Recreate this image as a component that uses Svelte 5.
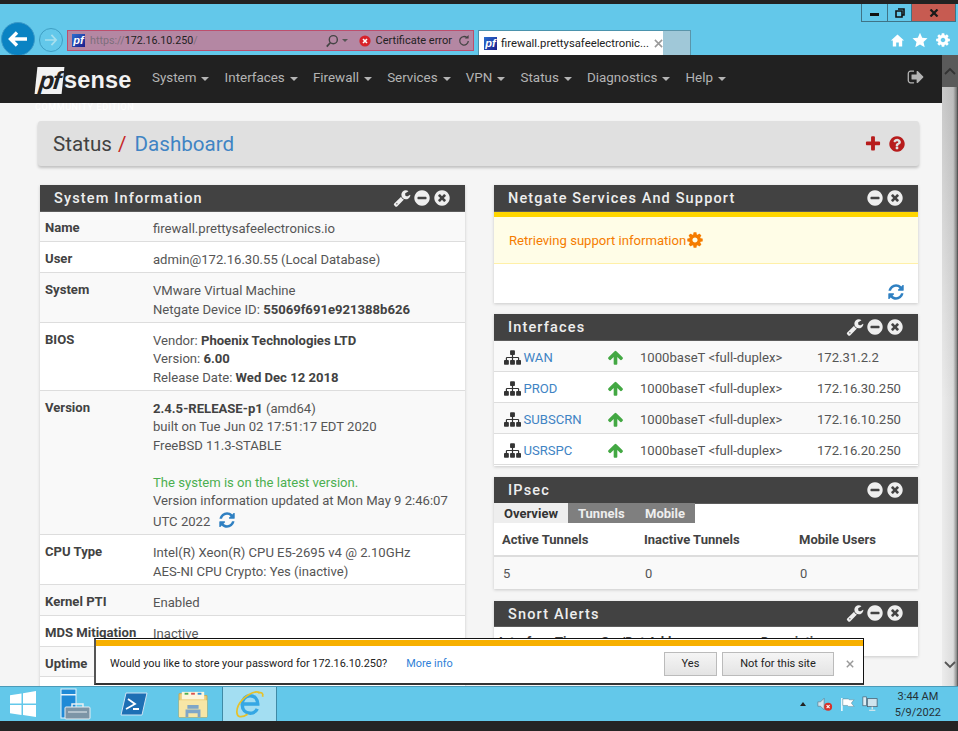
<script lang="ts">
  const icons: Record<string, string> = {
    wrench: "M448 1472q0-26-19-45t-45-19-45 19-19 45 19 45 45 19 45-19 19-45zm644-420l-682 682q-37 37-90 37-52 0-91-37l-106-108q-38-36-38-90 0-53 38-91l681-681q39 98 114.5 173.5t173.5 114.5zm634-435q0 39-23 106-47 134-164.5 217.5t-258.5 83.5q-185 0-316.5-131.5t-131.5-316.5 131.5-316.5 316.5-131.5q58 0 121.5 16.5t107.5 46.5q16 11 16 28t-16 28l-293 169v224l193 107q5-3 79-48.5t135.5-81 70.5-35.5q15 0 23.5 10t8.5 25z",
    refresh: "M1639 1056q0 5-1 7-64 268-268 434.5t-478 166.5q-146 0-282.5-55t-243.5-157l-129 129q-19 19-45 19t-45-19-19-45v-448q0-26 19-45t45-19h448q26 0 45 19t19 45-19 45l-137 137q71 66 161 102t187 36q134 0 250-65t186-179q11-17 53-117 8-23 30-23h192q13 0 22.5 9.5t9.5 22.5zm25-800v448q0 26-19 45t-45 19h-448q-26 0-45-19t-19-45 19-45l138-138q-148-137-349-137-134 0-250 65t-186 179q-11 17-53 117-8 23-30 23h-199q-13 0-22.5-9.5t-9.5-22.5v-7q65-268 270-434.5t480-166.5q146 0 284 55.5t245 156.5l130-129q19-19 45-19t45 19 19 45z",
    sitemap: "M1792 1248v320q0 40-28 68t-68 28h-320q-40 0-68-28t-28-68v-320q0-40 28-68t68-28h96v-192h-512v192h96q40 0 68 28t28 68v320q0 40-28 68t-68 28h-320q-40 0-68-28t-28-68v-320q0-40 28-68t68-28h96v-192h-512v192h96q40 0 68 28t28 68v320q0 40-28 68t-68 28h-320q-40 0-68-28t-28-68v-320q0-40 28-68t68-28h96v-192q0-52 38-90t90-38h512v-192h-96q-40 0-68-28t-28-68v-320q0-40 28-68t68-28h320q40 0 68 28t28 68v320q0 40-28 68t-68 28h-96v192h512q52 0 90 38t38 90v192h96q40 0 68 28t28 68z",
    up: "M1675 971q0 51-37 90l-75 75q-38 38-91 38-54 0-90-38l-294-293v704q0 52-37.5 84.5t-90.5 32.5h-128q-53 0-90.5-32.5t-37.5-84.5v-704l-294 293q-36 38-90 38t-90-38l-75-75q-38-38-38-90 0-53 38-91l651-651q35-37 90-37 54 0 91 37l651 651q37 39 37 91z",
    minus: "M1344 960v-128q0-26-19-45t-45-19h-768q-26 0-45 19t-19 45v128q0 26 19 45t45 19h768q26 0 45-19t19-45zm320-64q0 209-103 385.5t-279.5 279.5-385.5 103-385.5-103-279.5-279.5-103-385.5 103-385.5 279.5-279.5 385.5-103 385.5 103 279.5 279.5 103 385.5z",
    times: "M1277 1122q0-26-19-45l-181-181 181-181q19-19 19-45 0-27-19-46l-90-90q-19-19-46-19-26 0-45 19l-181 181-181-181q-19-19-45-19-27 0-46 19l-90 90q-19 19-19 46 0 26 19 45l181 181-181 181q-19 19-19 45 0 27 19 46l90 90q19 19 46 19 26 0 45-19l181-181 181 181q19 19 45 19 27 0 46-19l90-90q19-19 19-46zm387-226q0 209-103 385.5t-279.5 279.5-385.5 103-385.5-103-279.5-279.5-103-385.5 103-385.5 279.5-279.5 385.5-103 385.5 103 279.5 279.5 103 385.5z",
    plus: "M1600 736v192q0 40-28 68t-68 28h-416v416q0 40-28 68t-68 28h-192q-40 0-68-28t-28-68v-416h-416q-40 0-68-28t-28-68v-192q0-40 28-68t68-28h416v-416q0-40 28-68t68-28h192q40 0 68 28t28 68v416h416q40 0 68 28t28 68z",
    help: "M1024 1376v-192q0-14-9-23t-23-9h-192q-14 0-23 9t-9 23v192q0 14 9 23t23 9h192q14 0 23-9t9-23zm256-672q0-88-55.5-163t-138.5-116-170-41q-243 0-371 213-15 24 8 42l132 100q7 6 19 6 16 0 25-12 53-68 86-92 34-24 86-24 48 0 85.5 26t37.5 59q0 38-20 61t-68 45q-63 28-115.5 86.5t-52.5 125.5v36q0 14 9 23t23 9h192q14 0 23-9t9-23q0-19 21.5-49.5t54.5-49.5q32-18 49-28.5t46-35 44.5-48 28-60.5 12.5-81zm384 192q0 209-103 385.5t-279.5 279.5-385.5 103-385.5-103-279.5-279.5-103-385.5 103-385.5 279.5-279.5 385.5-103 385.5 103 279.5 279.5 103 385.5z",
    cog: "M1152 896q0-106-75-181t-181-75-181 75-75 181 75 181 181 75 181-75 75-181zm512-109v222q0 12-8 23t-20 13l-185 28q-19 54-39 91 35 50 107 138 10 12 10 25t-9 23q-27 37-99 108t-94 71q-12 0-26-9l-138-108q-44 23-91 38-16 136-29 186-7 28-36 28h-222q-14 0-24.5-8.5t-11.5-21.5l-28-184q-49-16-90-37l-141 107q-10 9-25 9-14 0-25-11-126-114-165-168-7-10-7-23 0-12 8-23 15-21 51-66.5t54-70.5q-27-50-41-99l-183-27q-13-2-21-12.5t-8-23.5v-222q0-12 8-23t19-13l186-28q14-46 39-92-40-57-107-138-10-12-10-24 0-10 9-23 26-36 98.5-107.5t94.5-71.5q13 0 26 10l138 107q44-23 91-38 16-136 29-186 7-28 36-28h222q14 0 24.5 8.5t11.5 21.5l28 184q49 16 90 37l142-107q9-9 24-9 13 0 25 10 129 119 165 170 7 8 7 22 0 12-8 23-15 21-51 66.5t-54 70.5q26 50 41 98l183 28q13 2 21 12.5t8 23.5z",
    signout: "M704 1440q0 4 1 20t.5 26.5-3 23.5-10 19.5-20.5 6.5h-320q-119 0-203.5-84.5t-84.5-203.5v-704q0-119 84.5-203.5t203.5-84.5h320q13 0 22.5 9.5t9.5 22.5q0 4 1 20t.5 26.5-3 23.5-10 19.5-20.5 6.5h-320q-66 0-113 47t-47 113v704q0 66 47 113t113 47h312l11.5 1 11.5 3 8 5.5 7 9 2 13.5zm928-544q0 26-19 45l-544 544q-19 19-45 19t-45-19-19-45v-288h-448q-26 0-45-19t-19-45v-384q0-26 19-45t45-19h448v-288q0-26 19-45t45-19 45 19l544 544q19 19 19 45z",
  };

  const navItems = ["System", "Interfaces", "Firewall", "Services", "VPN", "Status", "Diagnostics", "Help"];

  const interfaces = [
    { name: "WAN", media: "1000baseT <full-duplex>", ip: "172.31.2.2" },
    { name: "PROD", media: "1000baseT <full-duplex>", ip: "172.16.30.250" },
    { name: "SUBSCRN", media: "1000baseT <full-duplex>", ip: "172.16.10.250" },
    { name: "USRSPC", media: "1000baseT <full-duplex>", ip: "172.16.20.250" },
  ];
</script>

{#snippet fa(name: string, cls: string)}
  <svg class={cls} viewBox="0 0 1792 1792" aria-hidden="true"><path d={icons[name]} fill="currentColor" /></svg>
{/snippet}

{#snippet panelHead(title: string, wrench: boolean)}
  <div class="panel-head">
    <h2>{title}</h2>
    <div class="panel-tools">
      {#if wrench}{@render fa("wrench", "tool")}{/if}
      {@render fa("minus", "tool")}
      {@render fa("times", "tool")}
    </div>
  </div>
{/snippet}

<div class="screen">
  <div class="titlebar">
    <div class="win-buttons">
      <div class="wb wb-min"><span></span></div>
      <div class="wb wb-max">
        <svg viewBox="0 0 10 10" width="10" height="10"><path d="M3 1h6v6H7M1 3h6v6H1z" fill="none" stroke="#111" stroke-width="1.6" /></svg>
      </div>
      <div class="wb wb-close">
        <svg viewBox="0 0 10 8" width="10" height="8"><path d="M1.5 .5l7 7M8.5 .5l-7 7" stroke="#1a1a1a" stroke-width="2.2" /></svg>
      </div>
    </div>
  </div>

  <div class="toolbar">
    <div class="back">
      <svg viewBox="0 0 20 16" width="20" height="16"><path d="M9 1.5L2.5 8 9 14.5M3 8h16" fill="none" stroke="#fff" stroke-width="3.4" /></svg>
    </div>
    <div class="forward">
      <svg viewBox="0 0 16 14" width="14" height="12"><path d="M8.5 1L14 7l-5.5 6M14 7H1" fill="none" stroke="#a6dfee" stroke-width="2" /></svg>
    </div>
    <div class="address">
      <span class="favicon">pf</span>
      <span class="url"><span class="url-dim">https://</span>172.16.10.250<span class="url-dim">/</span></span>
      <svg class="addr-search" viewBox="0 0 16 16" width="14" height="14"><circle cx="9.5" cy="6.5" r="4.6" fill="none" stroke="#444" stroke-width="1.6" /><path d="M6 10l-4 4.5" stroke="#444" stroke-width="2" /></svg>
      <span class="addr-caret"></span>
      <span class="cert-x">
        <svg viewBox="0 0 12 12" width="12" height="12"><circle cx="6" cy="6" r="5.6" fill="#d8222a" /><path d="M4 4l4 4M8 4l-4 4" stroke="#fff" stroke-width="1.6" /></svg>
      </span>
      <span class="cert">Certificate error</span>
      <svg class="addr-reload" viewBox="0 0 14 14" width="12" height="12"><path d="M10.5 3.2A5 5 0 1 0 12 7" fill="none" stroke="#444" stroke-width="1.5" /><path d="M8 4h4.4V0z" fill="#444" /></svg>
    </div>
    <div class="tab">
      <span class="favicon">pf</span>
      <span class="tab-title">firewall.prettysafeelectronic...</span>
      <svg viewBox="0 0 10 10" width="9" height="9"><path d="M1 1l8 8M9 1l-8 8" stroke="#999" stroke-width="1.7" /></svg>
    </div>
    <div class="new-tab"></div>
    <div class="browser-tools">
      <svg viewBox="0 0 16 16" width="15" height="15"><path d="M8 1.5L1 8h2v6.5h3.6V10h2.8v4.5H13V8h2z" fill="#fff" /></svg>
      <svg viewBox="0 0 16 16" width="16" height="16"><path d="M8 .8l2.2 4.9 5.3.6-4 3.6 1.2 5.3L8 12.5l-4.7 2.7 1.2-5.3-4-3.6 5.3-.6z" fill="#fff" /></svg>
      <svg class="gear" viewBox="0 0 1792 1792" width="16" height="16"><path d={icons.cog} fill="#fff" /></svg>
    </div>
  </div>

  <div class="viewport">
    <div class="page">
      <nav class="navbar">
        <div class="logo">
          <span class="logo-pf">pf</span><span class="logo-sense">sense</span>
          <span class="edition">COMMUNITY EDITION</span>
        </div>
        <ul class="menu">
          {#each navItems as item}
            <li>{item}<span class="caret"></span></li>
          {/each}
        </ul>
        {@render fa("signout", "signout")}
      </nav>

      <div class="content">
        <header class="crumbs">
          <h1>Status <span class="slash">/</span> <a href="#dash">Dashboard</a></h1>
          <div class="crumb-tools">
            {@render fa("plus", "crumb-icon")}
            {@render fa("help", "crumb-icon")}
          </div>
        </header>

        <div class="columns">
          <div class="col col-left">
            <section class="panel">
              {@render panelHead("System Information", true)}
              <div class="info">
                <div class="info-row"><b>Name</b><div>firewall.prettysafeelectronics.io</div></div>
                <div class="info-row"><b>User</b><div>admin@172.16.30.55 (Local Database)</div></div>
                <div class="info-row"><b>System</b><div>VMware Virtual Machine<br />Netgate Device ID: <strong>55069f691e921388b626</strong></div></div>
                <div class="info-row"><b>BIOS</b><div>Vendor: <strong>Phoenix Technologies LTD</strong><br />Version: <strong>6.00</strong><br />Release Date: <strong>Wed Dec 12 2018</strong></div></div>
                <div class="info-row">
                  <b>Version</b>
                  <div>
                    <strong>2.4.5-RELEASE-p1</strong> (amd64)<br />
                    built on Tue Jun 02 17:51:17 EDT 2020<br />
                    FreeBSD 11.3-STABLE<br /><br />
                    <span class="ok">The system is on the latest version.</span><br />
                    Version information updated at Mon May 9 2:46:07 UTC 2022 {@render fa("refresh", "inline-refresh")}
                  </div>
                </div>
                <div class="info-row"><b>CPU Type</b><div>Intel(R) Xeon(R) CPU E5-2695 v4 @ 2.10GHz<br />AES-NI CPU Crypto: Yes (inactive)</div></div>
                <div class="info-row"><b>Kernel PTI</b><div>Enabled</div></div>
                <div class="info-row"><b>MDS Mitigation</b><div>Inactive</div></div>
                <div class="info-row"><b>Uptime</b><div></div></div>
                <div class="info-row"><b></b><div>&nbsp;</div></div>
              </div>
            </section>
          </div>

          <div class="col col-right">
            <section class="panel">
              {@render panelHead("Netgate Services And Support", false)}
              <div class="support">
                <div class="retrieving">Retrieving support information{@render fa("cog", "retr-cog")}</div>
                <div class="support-foot">{@render fa("refresh", "foot-refresh")}</div>
              </div>
            </section>

            <section class="panel">
              {@render panelHead("Interfaces", true)}
              <div class="ifaces">
                {#each interfaces as row}
                  <div class="iface">
                    <span class="iface-name">{@render fa("sitemap", "sitemap")}<a href="#if">{row.name}</a></span>
                    {@render fa("up", "up")}
                    <span>{row.media}</span>
                    <span>{row.ip}</span>
                  </div>
                {/each}
              </div>
            </section>

            <section class="panel">
              {@render panelHead("IPsec", false)}
              <div class="tabs">
                <span class="tab-on">Overview</span>
                <span class="tab-off">Tunnels</span>
                <span class="tab-off">Mobile</span>
              </div>
              <div class="ipsec ipsec-head"><span>Active Tunnels</span><span>Inactive Tunnels</span><span>Mobile Users</span></div>
              <div class="ipsec ipsec-row"><span>5</span><span>0</span><span>0</span></div>
            </section>

            <section class="panel">
              {@render panelHead("Snort Alerts", true)}
              <div class="snort"><span>Interface</span><span>Time</span><span>Src/Dst Address</span><span>Description</span></div>
            </section>
          </div>
        </div>
      </div>
    </div>

    <div class="scrollbar">
      <div class="sb-top">
        <svg viewBox="0 0 12 8" width="12" height="8"><path d="M1 7l5-5 5 5" fill="none" stroke="#333" stroke-width="1.8" /></svg>
      </div>
      <div class="sb-track"></div>
      <div class="sb-bottom">
        <svg viewBox="0 0 12 8" width="12" height="8"><path d="M1 1l5 5 5-5" fill="none" stroke="#555" stroke-width="1.8" /></svg>
      </div>
    </div>

    <div class="notify">
      <div class="notify-bar"></div>
      <div class="notify-body">
        <span class="notify-text">Would you like to store your password for 172.16.10.250?</span>
        <a class="notify-link" href="#info">More info</a>
        <button class="btn-yes">Yes</button>
        <button class="btn-no">Not for this site</button>
        <svg class="notify-x" viewBox="0 0 10 10" width="8" height="8"><path d="M1 1l8 8M9 1l-8 8" stroke="#999" stroke-width="1.8" /></svg>
      </div>
    </div>
  </div>

  <div class="taskbar">
    <div class="start">
      <svg viewBox="0 0 26 26" width="26" height="26"><path d="M0 4.2L11.5 2.4V12.4H0zM13 2.2L26 0V12.4H13zM0 14H11.5V24L0 22.2zM13 14H26V26L13 24z" fill="#fff" /></svg>
    </div>
    <div class="task">
      <svg viewBox="0 0 32 32" width="32" height="32">
        <rect x="2" y="1" width="15" height="29" fill="#1f8ad6" stroke="#e8f4fb" />
        <rect x="2" y="6" width="15" height="1.5" fill="#e8f4fb" />
        <rect x="6" y="19" width="25" height="12" rx="1" fill="#7d95a6" stroke="#e8eef2" />
        <path d="M13 19v-3h11v3" fill="none" stroke="#e8eef2" stroke-width="1.5" />
        <path d="M9 24h19" stroke="#e8eef2" />
      </svg>
    </div>
    <div class="task">
      <svg viewBox="0 0 28 24" width="28" height="24">
        <path d="M6 1h21l-5 22H1z" fill="#1d6fb4" stroke="#cfe3f3" />
        <path d="M8 7l7 5-9 5M13 17h6" fill="none" stroke="#fff" stroke-width="1.8" />
      </svg>
    </div>
    <div class="task">
      <svg viewBox="0 0 32 30" width="32" height="28">
        <path d="M1 4h9l2 2h19v23H1z" fill="#eccf7b" stroke="#c9a94d" />
        <rect x="4" y="2" width="24" height="8" fill="#fdf6dc" />
        <rect x="7" y="3" width="4" height="2" fill="#4caf50" />
        <rect x="14" y="3" width="4" height="2" fill="#d9534f" />
        <rect x="21" y="3" width="4" height="2" fill="#2f8fdc" />
        <path d="M1 11h30v18H1z" fill="#f7e6a6" />
        <path d="M8 21h16v8h-3v-4H11v4H8zM10 16h12v4H10z" fill="#7fa6c8" />
      </svg>
    </div>
    <div class="task task-active">
      <svg viewBox="0 0 32 32" width="31" height="31">
        <path d="M9 15.5h15.5c0-5-3.2-8.5-8-8.5-4.5 0-8 3.5-8 9s3.5 9 8.2 9c3.5 0 6-1.7 7.3-4.5" fill="none" stroke="#35a7e4" stroke-width="3.6" />
        <path d="M26 3.5C21 1 9 8 4.5 17 2 22.5 2.5 28 6 28.5c2.5.4 5.5-.8 8-2.5" fill="none" stroke="#e6c12b" stroke-width="1.8" />
        <path d="M25 4c3.5-1 5.5.5 4.5 4" fill="none" stroke="#e6c12b" stroke-width="1.8" />
      </svg>
    </div>
    <div class="tray">
      <span class="tray-caret"></span>
      <svg viewBox="0 0 18 16" width="16" height="15"><path d="M1 5h3l4-4v13l-4-4H1z" fill="#cfe4ee" stroke="#567" stroke-width=".6" /><circle cx="12.5" cy="10.5" r="4.5" fill="#d8322a" /><path d="M10.8 8.8l3.4 3.4M14.2 8.8l-3.4 3.4" stroke="#fff" stroke-width="1.2" /></svg>
      <svg viewBox="0 0 16 16" width="15" height="15"><path d="M2 1v14" stroke="#fff" stroke-width="1.5" /><path d="M3 2h6l1 1h5l-3 3.5 3 3.5H9l-1-1H3z" fill="#fff" stroke="#5a7a8a" stroke-width=".5" /></svg>
      <svg viewBox="0 0 18 18" width="16" height="16"><rect x="1" y="1" width="4" height="10" fill="#dcecf3" stroke="#456" stroke-width=".7" /><rect x="6" y="3" width="11" height="9" fill="#cfe4ee" stroke="#456" stroke-width=".8" /><path d="M11.5 12v3M8 16h7" stroke="#eee" stroke-width="1.3" /></svg>
      <div class="clock"><span>3:44 AM</span><span>5/9/2022</span></div>
    </div>
  </div>

  <div class="desk-edge"></div>
</div>

<style>
  :global(body) {
    margin: 0;
    background: #222;
  }

  .screen {
    width: 958px;
    height: 731px;
    display: flex;
    flex-direction: column;
    overflow: hidden;
    background: #222;
    font-family: Roboto, "Liberation Sans", sans-serif;
  }

  .titlebar {
    margin-top: 4px;
    height: 26px;
    flex: none;
    background: #63c8ea;
    display: flex;
    justify-content: flex-end;
    align-items: flex-start;
  }

  .win-buttons {
    display: flex;
    height: 18px;
    margin-right: 2px;
    border: 1px solid #3f7386;
    border-top: none;
    box-sizing: border-box;
  }
  .wb {
    display: flex;
    align-items: center;
    justify-content: center;
    box-sizing: border-box;
    border-right: 1px solid #3f7386;
  }
  .wb-min { width: 26px; }
  .wb-min span { width: 9px; height: 3px; background: #111; margin-top: 4px; }
  .wb-max { width: 24px; }
  .wb-close { width: 43px; background: #c75b51; border-right: none; }

  .toolbar {
    height: 25px;
    flex: none;
    background: #63c8ea;
    display: flex;
    align-items: flex-start;
    position: relative;
  }

  .back {
    position: absolute;
    left: 1px;
    top: -8px;
    width: 34px;
    height: 34px;
    border-radius: 50%;
    background: #0a83c3;
    border: 1px solid #3b9ac9;
    box-sizing: border-box;
    display: flex;
    align-items: center;
    justify-content: center;
  }
  .forward {
    position: absolute;
    left: 39px;
    top: -2px;
    width: 24px;
    height: 24px;
    box-sizing: border-box;
    border: 1px solid #3f9fc4;
    border-radius: 50%;
    display: flex;
    align-items: center;
    justify-content: center;
  }

  .address {
    margin-left: 67px;
    width: 407px;
    height: 21px;
    box-sizing: border-box;
    background: #b487a3;
    border: 1px solid #bd4f6d;
    display: flex;
    align-items: center;
    padding: 0 3px 0 4px;
    font-size: 11px;
    color: #222;
  }
  .favicon {
    width: 13px;
    height: 13px;
    flex: none;
    background: linear-gradient(135deg, #2a6fd0, #1c1c8a);
    color: #fff;
    font: italic bold 11px/12px "Liberation Sans", sans-serif;
    text-align: center;
    overflow: hidden;
  }
  .url {
    margin-left: 5px;
    font-size: 10.7px;
    flex: 1;
  }
  .url-dim { color: #7d6f7c; }
  .addr-search { margin-right: 3px; }
  .addr-caret {
    border: 3px solid transparent;
    border-top: 3px solid #555;
    margin-top: 3px;
    margin-right: 11px;
  }
  .cert-x { display: flex; margin-right: 5px; }
  .cert { font-size: 11px; margin-right: 6px; }
  .addr-reload { margin-right: 0; }

  .tab {
    margin-left: 4px;
    width: 185px;
    height: 25px;
    box-sizing: border-box;
    background: #fff;
    border-left: 1px solid #4b93ad;
    border-top: 1px solid #4b93ad;
    display: flex;
    align-items: center;
    padding-left: 5px;
    gap: 4px;
    font-size: 11.3px;
    color: #222;
    white-space: nowrap;
  }
  .tab-title { width: 149px; }
  .new-tab {
    width: 28px;
    height: 25px;
    box-sizing: border-box;
    background: #a0c8d8;
    border: 1px solid #5a95aa;
    border-bottom: none;
    border-left: none;
  }
  .browser-tools {
    margin-left: auto;
    margin-right: 7px;
    display: flex;
    align-items: center;
    gap: 7px;
    height: 20px;
  }

  .viewport {
    flex: 1;
    min-height: 0;
    display: flex;
    position: relative;
    background: #f5f5f5;
  }

  .page {
    flex: 1;
    min-width: 0;
    overflow: hidden;
  }

  .navbar {
    height: 48px;
    background: #212121;
    display: flex;
    align-items: center;
    position: relative;
  }

  .logo {
    margin-left: 36px;
    width: 96px;
    height: 28px;
    display: flex;
    align-items: center;
    position: relative;
    margin-top: 2px;
    flex: none;
  }
  .logo-pf {
    width: 27px;
    height: 27px;
    background: #f2f2f2;
    color: #212121;
    font: italic bold 25px/26px "Liberation Sans", sans-serif;
    letter-spacing: -1.5px;
    text-align: center;
    transform: skewX(-6deg);
  }
  .logo-sense {
    margin-left: 1px;
    color: #f2f2f2;
    font: bold 23.5px/24px "Liberation Sans", sans-serif;
    letter-spacing: 0.2px;
  }
  .edition {
    position: absolute;
    left: -1px;
    top: 36px;
    font-size: 9px;
    color: #fff;
    letter-spacing: 0.6px;
    white-space: nowrap;
  }

  .menu {
    list-style: none;
    margin: -3px 0 0 20px;
    padding: 0;
    display: flex;
    gap: 15.2px;
    font-size: 13.4px;
    color: #b4b4b4;
  }
  .menu li {
    display: flex;
    align-items: center;
  }
  .caret {
    margin-left: 5px;
    margin-top: 2px;
    border: 4px solid transparent;
    border-top: 4px solid #b4b4b4;
    border-bottom: none;
  }
  .signout {
    position: absolute;
    right: 17px;
    top: 13px;
    width: 18px;
    height: 18px;
    color: #b4b4b4;
  }

  .content {
    padding: 18px 0 0 38px;
    height: 583px;
    box-sizing: border-box;
    overflow: hidden;
  }

  .crumbs {
    width: 881px;
    height: 45px;
    box-sizing: border-box;
    background: #e0e0e0;
    border-radius: 3px;
    box-shadow: 0 2px 3px rgba(0, 0, 0, 0.22);
    display: flex;
    align-items: center;
    justify-content: space-between;
    padding: 0 13px 0 15px;
  }
  h1 {
    margin: 0;
    font-size: 20.6px;
    font-weight: 400;
    color: #424242;
  }
  .slash { color: #c62828; margin-right: 3px; margin-left: 1px; }
  h1 a { color: #3f84c4; text-decoration: none; }
  .crumb-tools {
    display: flex;
    gap: 6px;
    align-items: center;
    color: #b71c1c;
  }
  .crumb-icon { width: 18px; height: 18px; }

  .columns {
    display: flex;
    gap: 29px;
    margin-top: 19px;
    margin-left: 2px;
    align-items: flex-start;
  }
  .col {
    display: flex;
    flex-direction: column;
    gap: 11.5px;
  }
  .col-left { width: 425px; }
  .col-right { width: 424px; }

  .panel {
    background: #fff;
    box-shadow: 0 1px 3px rgba(0, 0, 0, 0.18);
  }
  .panel-head {
    height: 26.5px;
    box-sizing: border-box;
    background: #424242;
    border-bottom: 1px solid #5c5c5c;
    display: flex;
    align-items: center;
    justify-content: space-between;
    padding: 0 14px;
  }
  .panel-head h2 {
    margin: 1.5px 0 0;
    font-size: 14.5px;
    font-weight: 500;
    letter-spacing: 1.15px;
    color: #eee;
  }
  .panel-tools {
    display: flex;
    align-items: center;
    gap: 2px;
    color: #eee;
  }
  .tool { width: 18px; height: 18px; }

  .info { font-size: 13.1px; line-height: 18.57px; color: #555; }
  .info-row {
    display: grid;
    grid-template-columns: 108px 1fr;
    padding: 8.5px 5px 2.93px;
    border-bottom: 1px solid #ddd;
    background: #fff;
  }
  .info-row:nth-child(odd) { background: #f9f9f9; }
  .info-row b { font-weight: 700; color: #424242; margin-top: -1px; }
  .info-row strong { color: #424242; }
  .ok { color: #4caf50; }
  .inline-refresh {
    width: 18px;
    height: 18px;
    color: #2f80c2;
    vertical-align: -3px;
    margin-left: 4px;
  }

  .support { height: 91px; display: flex; flex-direction: column; }
  .retrieving {
    height: 52.5px;
    box-sizing: border-box;
    background: #fffde7;
    border-top: 5px solid #ffd600;
    border-bottom: 1px solid #fff0a8;
    display: flex;
    align-items: center;
    padding: 1px 0 0 15px;
    font-size: 13.1px;
    color: #f57c00;
  }
  .retr-cog { width: 18px; height: 18px; color: #f57c00; }
  .support-foot {
    flex: 1;
    display: flex;
    justify-content: flex-end;
    align-items: flex-end;
    padding: 0 13px 2px 0;
    color: #2f80c2;
  }
  .foot-refresh { width: 18px; height: 18px; }

  .ifaces { font-size: 13.1px; color: #555; padding: 0.5px 0; }
  .iface {
    height: 31px;
    box-sizing: border-box;
    display: grid;
    grid-template-columns: 103px 33px 177px 1fr;
    align-items: center;
    padding: 2px 0 0 10px;
    border-bottom: 1px solid #ddd;
    background: #fff;
  }
  .iface:nth-child(odd) { background: #f9f9f9; }
  .iface-name { display: flex; align-items: center; gap: 2.5px; }
  .iface-name a { color: #3f84c4; text-decoration: none; }
  .sitemap { width: 17px; height: 17px; color: #333; }
  .up { width: 17px; height: 17px; color: #43a843; margin-left: -0.5px; }

  .tabs {
    display: flex;
    height: 20.5px;
    margin-top: -1px;
    font-size: 13px;
    font-weight: 700;
    line-height: 21px;
    position: relative;
  }
  .tabs span { box-sizing: border-box; }
  .tab-on { background: #eee; color: #333; padding: 0 10px; width: 74px; }
  .tab-off { background: #7f7f7f; color: #eee; padding: 0 0 0 10px; width: 67px; }
  .tab-off + .tab-off { width: 60px; }

  .ipsec {
    display: grid;
    grid-template-columns: 142px 155px 1fr;
    padding-left: 8px;
    font-size: 13px;
    color: #555;
  }
  .ipsec-head {
    height: 34px;
    box-sizing: border-box;
    border-bottom: 2px solid #ddd;
    font-weight: 700;
    color: #424242;
    align-items: center;
  }
  .ipsec-row {
    height: 32px;
    align-items: center;
    background: #f9f9f9;
    padding-left: 9px;
  }

  .snort {
    height: 28.5px;
    display: grid;
    grid-template-columns: 56px 46px 160px 1fr;
    padding: 7px 0 0 5px;
    box-sizing: border-box;
    font-size: 13px;
    font-weight: 700;
    color: #424242;
  }

  .scrollbar {
    width: 16px;
    flex: none;
    display: flex;
    flex-direction: column;
    background:
      linear-gradient(rgba(0, 0, 0, 0.16), rgba(0, 0, 0, 0) 55%),
      linear-gradient(90deg, #ececec, #dcdcdc 70%, #8a8a8a 92%, #444);
  }
  .sb-top {
    height: 32px;
    background: #5a5a5a;
    display: flex;
    align-items: center;
    justify-content: center;
  }
  .sb-track { flex: 1; }
  .sb-bottom {
    height: 32px;
    display: flex;
    align-items: center;
    justify-content: center;
    margin-bottom: 5px;
  }

  .notify {
    position: absolute;
    left: 94px;
    top: 583px;
    width: 770px;
    height: 47px;
    box-sizing: border-box;
    background: #fff;
    border: 1px solid #111;
    border-left: 2px solid #555;
    border-bottom: 2px solid #333;
    display: flex;
    flex-direction: column;
  }
  .notify-bar { height: 6px; margin-top: 1px; background: #f7b000; flex: none; }
  .notify-body {
    flex: 1;
    display: flex;
    align-items: center;
    padding: 0 9px 2px 14px;
    font-size: 10.9px;
    color: #222;
  }
  .notify-link { margin-left: 19px; color: #2f7fd8; text-decoration: none; }
  .notify-body button {
    height: 24px;
    padding: 0;
    box-sizing: border-box;
    background: linear-gradient(#f5f5f5, #e4e4e4);
    border: 1px solid #bbb;
    font-family: inherit;
    font-size: 11px;
    color: #222;
  }
  .btn-yes { width: 53px; margin-left: auto; }
  .btn-no { width: 112px; margin-left: 5px; }
  .notify-x { margin-left: 12px; }

  .taskbar {
    height: 35px;
    flex: none;
    background: #63c8ea;
    display: flex;
    align-items: stretch;
    border-top: 1px solid #4a9ab8;
    box-sizing: border-box;
  }
  .start { width: 45px; display: flex; align-items: center; justify-content: center; }
  .task { width: 59px; display: flex; align-items: center; justify-content: center; }
  .task-active {
    width: 55px;
    background: #a3def2;
    border-left: 1px solid #3f8aa6;
    border-right: 1px solid #3f8aa6;
    box-sizing: border-box;
  }
  .tray {
    margin-left: auto;
    display: flex;
    align-items: center;
    gap: 7px;
    padding-right: 17px;
  }
  .tray-caret {
    border: 3px solid transparent;
    border-bottom: 4px solid #222;
    border-top: none;
    margin-right: 4px;
  }
  .clock {
    display: flex;
    flex-direction: column;
    align-items: center;
    margin-left: 10px;
    padding-top: 1px;
    font-size: 11px;
    line-height: 16px;
    color: #263238;
  }

  .desk-edge { height: 10px; flex: none; background: #242424; }
</style>
